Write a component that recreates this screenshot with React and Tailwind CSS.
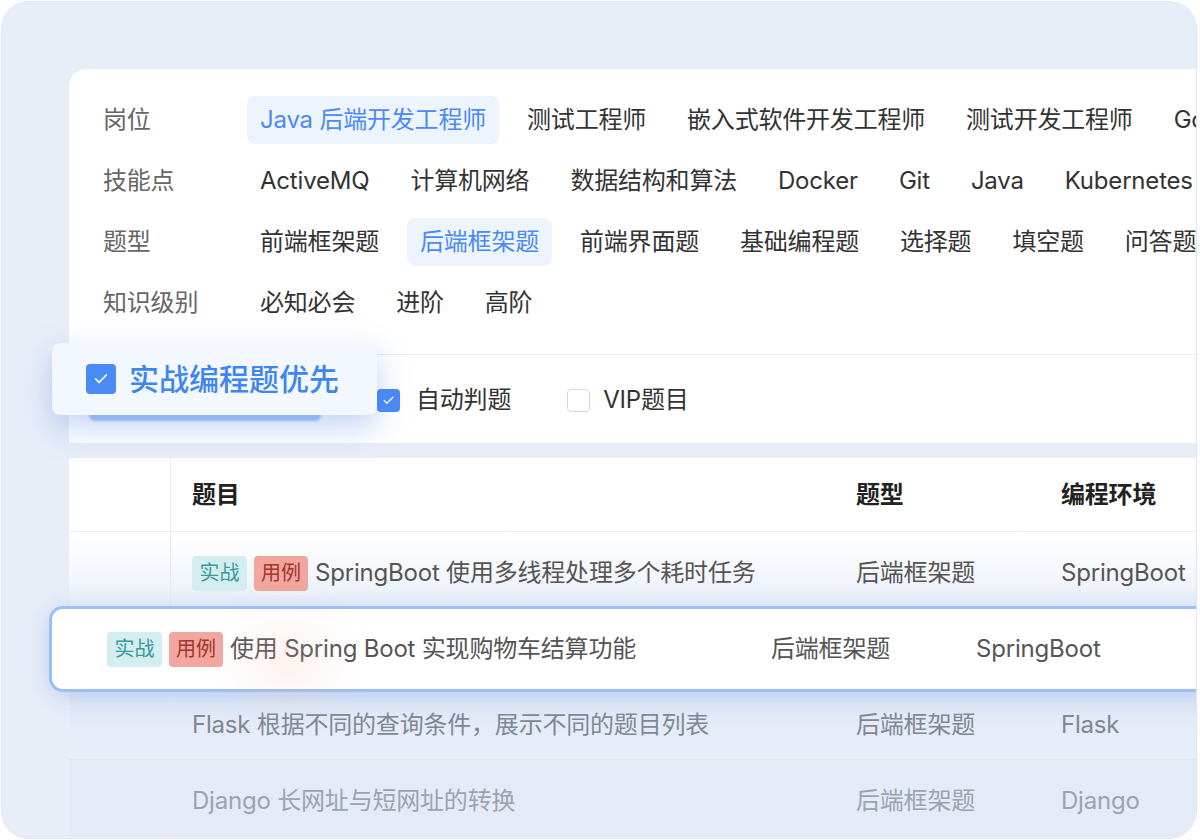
import { Check } from 'lucide-react';

const FONT = { fontFamily: 'Inter, "Noto Sans CJK SC", "Noto Sans", sans-serif' };

const FILTERS = [
  { label: '岗位', items: ['Java 后端开发工程师', '测试工程师', '嵌入式软件开发工程师', '测试开发工程师', 'Go 开发工程师'], active: 0 },
  { label: '技能点', items: ['ActiveMQ', '计算机网络', '数据结构和算法', 'Docker', 'Git', 'Java', 'Kubernetes', 'Linux'], active: -1 },
  { label: '题型', items: ['前端框架题', '后端框架题', '前端界面题', '基础编程题', '选择题', '填空题', '问答题'], active: 1 },
  { label: '知识级别', items: ['必知必会', '进阶', '高阶'], active: -1 },
];

const ROWS = [
  { tags: true, title: 'SpringBoot 使用多线程处理多个耗时任务', type: '后端框架题', env: 'SpringBoot', tone: 'normal' },
  { tags: false, title: '', type: '', env: '', tone: 'hidden' },
  { tags: false, title: 'Flask 根据不同的查询条件，展示不同的题目列表', type: '后端框架题', env: 'Flask', tone: 'faded' },
  { tags: false, title: 'Django 长网址与短网址的转换', type: '后端框架题', env: 'Django', tone: 'faded2' },
];

function Tags() {
  return (
    <>
      <span className="inline-flex items-center justify-center w-[55px] h-[35px] rounded-[4px] bg-[#d4edf0] text-[#3c9a9b] text-[20px] mr-[7px] tracking-normal">
        实战
      </span>
      <span className="inline-flex items-center justify-center w-[54px] h-[35px] rounded-[4px] bg-[#f1a79f] text-[#a4352b] text-[20px] mr-[7px] tracking-normal">
        用例
      </span>
    </>
  );
}

function CheckBox({ checked, size = 23 }) {
  if (!checked) {
    return <span className="inline-block w-[23px] h-[23px] rounded-[4px] border-[1.5px] border-[#d6d6d6] bg-white" />;
  }
  return (
    <span
      className={`inline-flex items-center justify-center rounded-[4px] bg-[#4a8af4] ${
        size === 30 ? 'w-[30px] h-[30px]' : 'w-[23px] h-[23px]'
      }`}
    >
      <Check size={size === 30 ? 16 : 13} strokeWidth={2.5} className="text-white" />
    </span>
  );
}

export default function App() {
  return (
    <div className="w-[1200px] h-[840px] bg-white tracking-[-0.2px]" style={FONT}>
      <div className="relative ml-[1px] mt-[1px] w-[1196px] h-[838px] rounded-[28px] border border-[#dfe5f3] bg-[#e8eef8] overflow-hidden pl-[67px] pt-[67px]">
        {/* filter card */}
        <div className="w-[1200px] bg-white rounded-tl-[18px]">
          <div className="pt-[27px] pl-[34px] flex flex-col gap-[13px]">
            {FILTERS.map((row) => (
              <div key={row.label} className="flex items-center h-[48px] whitespace-nowrap">
                <div className="w-[144px] shrink-0 text-[24px] text-[#666]">{row.label}</div>
                <div className="flex gap-[15px]">
                  {row.items.map((it, i) => (
                    <span
                      key={it}
                      className={`h-[48px] flex items-center px-[13px] rounded-[8px] text-[24px] ${
                        i === row.active ? 'bg-[#eef4fe] text-[#4a8af4]' : 'text-[#333]'
                      }`}
                    >
                      {it}
                    </span>
                  ))}
                </div>
              </div>
            ))}
          </div>
          <div className="mt-[27px] border-t border-[#ededed] pl-[20px] flex items-center h-[89px] whitespace-nowrap">
            <div className="w-[232px] h-[30px] mt-[14px] rounded-[6px] bg-[#a9c6f5] blur-[1px]" />
            <div className="ml-[56px] mt-[2px] flex items-center gap-[16px]">
              <CheckBox checked />
              <span className="text-[24px] text-[#333]">自动判题</span>
            </div>
            <div className="ml-[56px] mt-[2px] flex items-center gap-[13px]">
              <CheckBox checked={false} />
              <span className="text-[24px] text-[#333]">VIP题目</span>
            </div>
          </div>
        </div>

        {/* table card */}
        <div className="relative mt-[15px] w-[1200px] bg-white text-[24px] whitespace-nowrap">
          <div className="grid grid-cols-[102px_664px_205px_1fr] h-[74px] items-center border-b border-[#eeeeee] font-bold text-[#222]">
            <div className="h-full border-r border-[#eeeeee]" />
            <div className="pl-[21px]">题目</div>
            <div className="pl-[21px]">题型</div>
            <div className="pl-[21px]">编程环境</div>
          </div>
          {ROWS.map((r, idx) => (
            <div
              key={idx}
              className={`grid grid-cols-[102px_664px_205px_1fr] h-[76px] items-center border-b pt-[6px] ${
                r.tone === 'faded'
                  ? 'bg-gradient-to-b from-[#dfe8f6] to-[#e9eff9] text-[#7f8796] border-[#dfe6f2]'
                  : r.tone === 'faded2'
                  ? 'bg-[#e4ebf7] text-[#9ba3b1] border-[#dfe6f2]'
                  : 'bg-gradient-to-b from-white to-[#eaf0fa] text-[#555] border-[#eeeeee]'
              }`}
            >
              <div className="h-[76px] -mt-[6px] border-r border-[#e6ebf3]" />
              <div className="pl-[21px] flex items-center">
                {r.tags && <Tags />}
                <span>{r.title}</span>
              </div>
              <div className="pl-[21px]">{r.type}</div>
              <div className="pl-[21px]">{r.env}</div>
            </div>
          ))}
        </div>

        {/* floating highlighted row */}
        <div className="absolute left-[47px] top-[604px] w-[1200px] h-[86px] rounded-[14px] border-[3px] border-[#9cbff7] bg-white shadow-[0_4px_24px_rgba(110,150,225,0.35)] flex items-center whitespace-nowrap text-[24px] text-[#555] pl-[55px]">
          <div className="w-[664px] flex items-center">
            <Tags />
            <span>使用 Spring Boot 实现购物车结算功能</span>
          </div>
          <div className="w-[205px]">后端框架题</div>
          <div>SpringBoot</div>
        </div>

        {/* reddish glow over floating row */}
        <div className="pointer-events-none absolute left-[245px] top-[632px] w-[80px] h-[55px] rounded-full bg-[#f6b9ad] opacity-25 blur-xl" />

        {/* floating popup checkbox */}
        <div className="absolute left-[50px] top-[341px] w-[325px] h-[72px] rounded-[8px] bg-[#f3f7ff] shadow-[0_12px_32px_rgba(80,130,230,0.35)] flex items-center pl-[34px] gap-[13px]">
          <CheckBox checked size={30} />
          <span className="text-[30px] font-medium text-[#3d86f0] tracking-normal">实战编程题优先</span>
        </div>
      </div>
    </div>
  );
}
